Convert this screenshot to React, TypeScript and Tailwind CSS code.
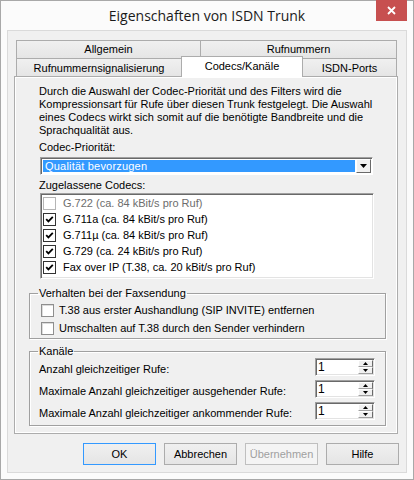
import { ReactNode } from 'react';
import clsx from 'clsx';

const UI_FONT = "font-['Liberation_Sans',Arial,sans-serif] text-[11px] leading-[13px] text-black";

const Tab = ({ children, className }: { children: ReactNode; className?: string }) => (
    <div
        className={clsx(
            'flex items-center justify-center border-t border-[#acacac] bg-gradient-to-b from-[#f0f0f0] to-[#e5e5e5]',
            className,
        )}
    >
        {children}
    </div>
);

const CheckMark = ({ color = '#000' }: { color?: string }) => (
    <svg width="9" height="9" viewBox="0 0 9 9">
        <polyline points="1.2,4.2 3.4,6.4 7.8,1.8" fill="none" stroke={color} strokeWidth="1.8" />
    </svg>
);

const ListCheck = ({ checked, disabled }: { checked?: boolean; disabled?: boolean }) => (
    <span
        className={clsx(
            'flex h-[13px] w-[13px] shrink-0 items-center justify-center border bg-white',
            disabled ? 'border-[#b5b5b5]' : 'border-[#333333]',
        )}
    >
        {checked && <CheckMark />}
    </span>
);

const GroupCheck = ({ label }: { label: string }) => (
    <div className="flex h-[18px] items-center gap-[5px] pl-[11px]">
        <span className="h-[13px] w-[13px] shrink-0 border border-[#8f8f8f] bg-white shadow-[inset_1px_1px_0_#dcdcdc]" />
        <span>{label}</span>
    </div>
);

const codecs = [
    { label: 'G.722 (ca. 84 kBit/s pro Ruf)', checked: false, disabled: true },
    { label: 'G.711a (ca. 84 kBit/s pro Ruf)', checked: true },
    { label: 'G.711µ (ca. 84 kBit/s pro Ruf)', checked: true },
    { label: 'G.729 (ca. 24 kBit/s pro Ruf)', checked: true },
    { label: 'Fax over IP (T.38, ca. 20 kBit/s pro Ruf)', checked: true },
];

const Spin = () => (
    <div className="flex h-[18px] w-[60px] shrink-0 border border-t-[#a0a0a0] border-l-[#a0a0a0] border-r-white border-b-white bg-white shadow-[inset_1px_1px_0_#696969,inset_-1px_-1px_0_#e3e3e3]">
        <span className="flex-1 pl-[2px] pt-[2px] text-[12px] leading-[13px]">1</span>
        <div className="my-[1px] mr-[1px] flex w-[15px] flex-col">
            {[0, 1].map((i) => (
                <div
                    key={i}
                    className="flex flex-1 items-center justify-center border border-t-white border-l-white border-r-[#696969] border-b-[#a0a0a0] bg-[#f0f0f0]"
                >
                    <svg width="5" height="3" viewBox="0 0 5 3">
                        <path d={i === 0 ? 'M2.5 0 L5 3 L0 3 Z' : 'M0 0 L5 0 L2.5 3 Z'} fill="#000" />
                    </svg>
                </div>
            ))}
        </div>
    </div>
);

const ChannelRow = ({ label }: { label: string }) => (
    <div className="flex items-start justify-between pl-[9px] pr-[10px]">
        <span className="mt-[5px]">{label}</span>
        <Spin />
    </div>
);

const DialogButton = ({
    children,
    isDefault,
    disabled,
}: {
    children: ReactNode;
    isDefault?: boolean;
    disabled?: boolean;
}) => (
    <button
        type="button"
        className={clsx(
            'h-[22px] w-[73px] border',
            disabled
                ? 'border-[#bfbfbf] bg-[#f4f4f4] text-[#a0a0a0]'
                : 'bg-gradient-to-b from-[#f0f0f0] to-[#e5e5e5]',
            isDefault && 'border-[#3399ff]',
            !disabled && !isDefault && 'border-[#acacac]',
        )}
    >
        {children}
    </button>
);

export default function App() {
    return (
        <div className={clsx(UI_FONT, 'flex h-[480px] w-[414px] flex-col border border-[#a8a8a8] bg-[#fbfbfb]')}>
            {/* caption */}
            <div className="grid h-[29px] shrink-0 grid-cols-[1fr_auto_1fr]">
                <div />
                <div className="flex items-center font-['Open_Sans',sans-serif] text-[14px] leading-[20px] text-[#1a1a1a]">
                    Eigenschaften von ISDN Trunk
                </div>
                <div className="flex items-start justify-end pr-[6px]">
                    <div className="-mt-[1px] flex h-[21px] w-[31px] items-center justify-center bg-[#c75050]">
                        <svg width="9" height="9" viewBox="0 0 9 9">
                            <path d="M1 1 L8 8 M8 1 L1 8" stroke="#fff" strokeWidth="1.8" />
                        </svg>
                    </div>
                </div>
            </div>

            {/* client area */}
            <div className="mx-[6px] flex h-[443px] shrink-0 flex-col border border-[#dadada] bg-[#f0f0f0]">
                <div className="pl-[6px] pr-[8px] pt-[9px]">
                    {/* tab strip */}
                    <div className="pl-[2px] pr-[1px]">
                        <div className="flex h-[18px]">
                            <Tab className="w-[184px] border-l">Allgemein</Tab>
                            <Tab className="flex-1 border-x">Rufnummern</Tab>
                        </div>
                        <div className="flex h-[18px]">
                            <Tab className="w-[165px] border-l pt-[1px]">Rufnummernsignalisierung</Tab>
                            <div className="relative z-10 -mt-[2px] flex h-[21px] w-[122px] items-start justify-center border-x border-t border-[#acacac] bg-white pt-[3px]">
                                Codecs/Kanäle
                            </div>
                            <Tab className="flex-1 border-r pt-[1px]">ISDN-Ports</Tab>
                        </div>
                    </div>

                    {/* tab page */}
                    <div className="border border-[#acacac] bg-[#f0f0f0] pb-[7px] pl-[14px] pr-[11px] pt-[8px] shadow-[inset_1px_1px_0_#fff,inset_-1px_-1px_0_#fff]">
                        <p className="whitespace-nowrap pl-[10px]">
                            Durch die Auswahl der Codec-Priorität und des Filters wird die
                            <br />
                            Kompressionsart für Rufe über diesen Trunk festgelegt. Die Auswahl
                            <br />
                            eines Codecs wirkt sich somit auf die benötigte Bandbreite und die
                            <br />
                            Sprachqualität aus.
                        </p>

                        <div className="mt-[4px] pl-[10px]">Codec-Priorität:</div>
                        <div className="ml-[11px] mt-[3px] flex h-[18px] w-[333px] border border-t-[#a0a0a0] border-l-[#a0a0a0] border-r-white border-b-white bg-white shadow-[inset_1px_1px_0_#696969]">
                            <div className="m-[2px] mr-[1px] flex flex-1 items-center bg-[#3399ff] pl-[2px] tracking-[0.2px] text-white">
                                Qualität bevorzugen
                            </div>
                            <div className="my-[1px] mr-[1px] flex w-[15px] items-center justify-center border border-t-white border-l-white border-r-[#696969] border-b-[#696969] bg-[#f0f0f0]">
                                <svg width="7" height="4" viewBox="0 0 7 4">
                                    <path d="M0 0 L7 0 L3.5 4 Z" fill="#000" />
                                </svg>
                            </div>
                        </div>

                        <div className="mt-[4px] pl-[10px]">Zugelassene Codecs:</div>
                        <div className="ml-[11px] mt-[1px] h-[86px] w-[334px] border border-t-[#a0a0a0] border-l-[#a0a0a0] border-r-white border-b-white bg-white p-[1px] shadow-[inset_1px_1px_0_#696969,inset_-1px_-1px_0_#e3e3e3]">
                            {codecs.map((c) => (
                                <div key={c.label} className="flex h-[16px] items-center gap-[7px] pl-[1px]">
                                    <ListCheck checked={c.checked} disabled={c.disabled} />
                                    <span className={c.disabled ? 'text-[#6d6d6d]' : ''}>{c.label}</span>
                                </div>
                            ))}
                        </div>

                        <fieldset className="mt-[8px] border border-[#a0a0a0] pb-[1px] pt-[1px] shadow-[inset_1px_1px_0_#fff,1px_1px_0_#fff]">
                            <legend className="ml-[8px] px-[1px]">Verhalten bei der Faxsendung</legend>
                            <GroupCheck label="T.38 aus erster Aushandlung (SIP INVITE) entfernen" />
                            <GroupCheck label="Umschalten auf T.38 durch den Sender verhindern" />
                        </fieldset>

                        <fieldset className="mt-[6px] flex flex-col gap-[4px] border border-[#a0a0a0] pb-[5px] shadow-[inset_1px_1px_0_#fff,1px_1px_0_#fff]">
                            <legend className="ml-[8px] px-[1px]">Kanäle</legend>
                            <ChannelRow label="Anzahl gleichzeitiger Rufe:" />
                            <ChannelRow label="Maximale Anzahl gleichzeitiger ausgehender Rufe:" />
                            <ChannelRow label="Maximale Anzahl gleichzeitiger ankommender Rufe:" />
                        </fieldset>
                    </div>
                </div>

                {/* dialog buttons */}
                <div className="mt-[9px] flex justify-end gap-[8px] pr-[7px]">
                    <DialogButton isDefault>OK</DialogButton>
                    <DialogButton>Abbrechen</DialogButton>
                    <DialogButton disabled>Übernehmen</DialogButton>
                    <DialogButton>Hilfe</DialogButton>
                </div>
            </div>
        </div>
    );
}
